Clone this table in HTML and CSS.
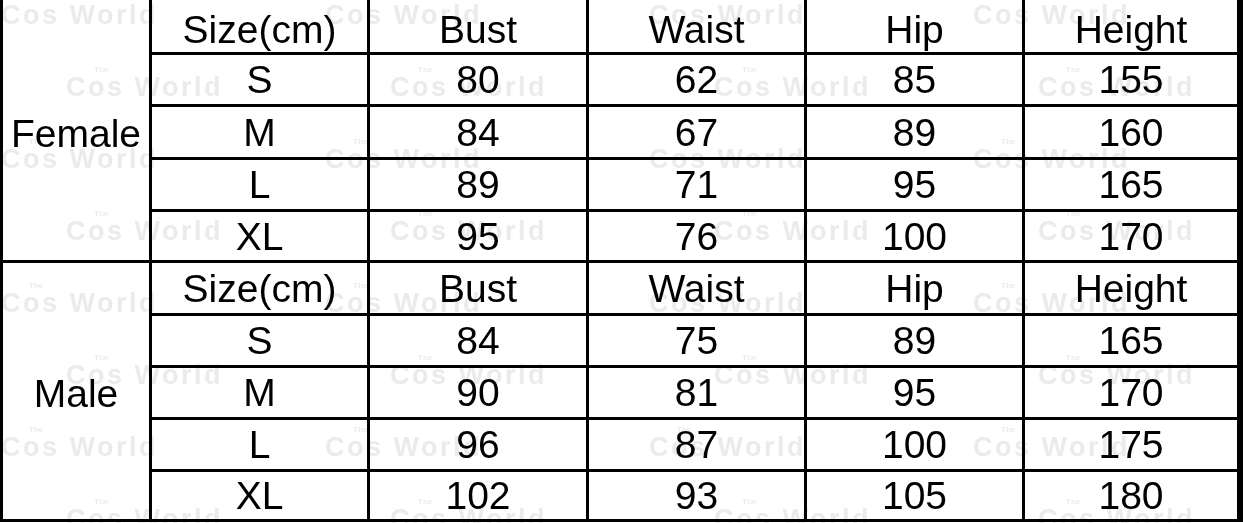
FILE: index.html
```html
<!DOCTYPE html>
<html>
<head>
<meta charset="utf-8">
<link rel="stylesheet" href="styles.css">
</head>
<body>
<div class="page">
  <div class="table">
    <div class="cell label female">Female</div>
    <div class="cell">Size(cm)</div><div class="cell">Bust</div><div class="cell">Waist</div><div class="cell">Hip</div><div class="cell">Height</div>
    <div class="cell">S</div><div class="cell">80</div><div class="cell">62</div><div class="cell">85</div><div class="cell">155</div>
    <div class="cell">M</div><div class="cell">84</div><div class="cell">67</div><div class="cell">89</div><div class="cell">160</div>
    <div class="cell">L</div><div class="cell">89</div><div class="cell">71</div><div class="cell">95</div><div class="cell">165</div>
    <div class="cell">XL</div><div class="cell">95</div><div class="cell">76</div><div class="cell">100</div><div class="cell">170</div>
    <div class="cell label male">Male</div>
    <div class="cell">Size(cm)</div><div class="cell">Bust</div><div class="cell">Waist</div><div class="cell">Hip</div><div class="cell">Height</div>
    <div class="cell">S</div><div class="cell">84</div><div class="cell">75</div><div class="cell">89</div><div class="cell">165</div>
    <div class="cell">M</div><div class="cell">90</div><div class="cell">81</div><div class="cell">95</div><div class="cell">170</div>
    <div class="cell">L</div><div class="cell">96</div><div class="cell">87</div><div class="cell">100</div><div class="cell">175</div>
    <div class="cell">XL</div><div class="cell">102</div><div class="cell">93</div><div class="cell">105</div><div class="cell">180</div>
  </div>
  <div class="watermarks" aria-hidden="true">
    <div class="wm-row even"><div class="wm"><span class="wm-the">The</span><span class="wm-name">Cos World</span></div><div class="wm"><span class="wm-the">The</span><span class="wm-name">Cos World</span></div><div class="wm"><span class="wm-the">The</span><span class="wm-name">Cos World</span></div><div class="wm"><span class="wm-the">The</span><span class="wm-name">Cos World</span></div></div>
    <div class="wm-row odd"><div class="wm"><span class="wm-the">The</span><span class="wm-name">Cos World</span></div><div class="wm"><span class="wm-the">The</span><span class="wm-name">Cos World</span></div><div class="wm"><span class="wm-the">The</span><span class="wm-name">Cos World</span></div><div class="wm"><span class="wm-the">The</span><span class="wm-name">Cos World</span></div></div>
    <div class="wm-row even"><div class="wm"><span class="wm-the">The</span><span class="wm-name">Cos World</span></div><div class="wm"><span class="wm-the">The</span><span class="wm-name">Cos World</span></div><div class="wm"><span class="wm-the">The</span><span class="wm-name">Cos World</span></div><div class="wm"><span class="wm-the">The</span><span class="wm-name">Cos World</span></div></div>
    <div class="wm-row odd"><div class="wm"><span class="wm-the">The</span><span class="wm-name">Cos World</span></div><div class="wm"><span class="wm-the">The</span><span class="wm-name">Cos World</span></div><div class="wm"><span class="wm-the">The</span><span class="wm-name">Cos World</span></div><div class="wm"><span class="wm-the">The</span><span class="wm-name">Cos World</span></div></div>
    <div class="wm-row even"><div class="wm"><span class="wm-the">The</span><span class="wm-name">Cos World</span></div><div class="wm"><span class="wm-the">The</span><span class="wm-name">Cos World</span></div><div class="wm"><span class="wm-the">The</span><span class="wm-name">Cos World</span></div><div class="wm"><span class="wm-the">The</span><span class="wm-name">Cos World</span></div></div>
    <div class="wm-row odd"><div class="wm"><span class="wm-the">The</span><span class="wm-name">Cos World</span></div><div class="wm"><span class="wm-the">The</span><span class="wm-name">Cos World</span></div><div class="wm"><span class="wm-the">The</span><span class="wm-name">Cos World</span></div><div class="wm"><span class="wm-the">The</span><span class="wm-name">Cos World</span></div></div>
    <div class="wm-row even"><div class="wm"><span class="wm-the">The</span><span class="wm-name">Cos World</span></div><div class="wm"><span class="wm-the">The</span><span class="wm-name">Cos World</span></div><div class="wm"><span class="wm-the">The</span><span class="wm-name">Cos World</span></div><div class="wm"><span class="wm-the">The</span><span class="wm-name">Cos World</span></div></div>
    <div class="wm-row odd"><div class="wm"><span class="wm-the">The</span><span class="wm-name">Cos World</span></div><div class="wm"><span class="wm-the">The</span><span class="wm-name">Cos World</span></div><div class="wm"><span class="wm-the">The</span><span class="wm-name">Cos World</span></div><div class="wm"><span class="wm-the">The</span><span class="wm-name">Cos World</span></div></div>
  </div>
</div>
</body>
</html>
```
FILE: styles.css
```css
html, body {
  margin: 0;
  padding: 0;
  background: #fff;
  overflow: hidden;
}
.page {
  position: relative;
  width: 1243px;
  height: 523px;
  overflow: hidden;
  font-family: "Liberation Sans", Arial, sans-serif;
}
.table {
  display: grid;
  grid-template-columns: 146px 215px 216px 215px 215px 212px;
  grid-template-rows: 52px 49px 50px 49px 48px 50px 49px 49px 49px 47px;
  gap: 3px;
  padding: 0 6px 3px 3px;
  width: max-content;
  background: #000;
}
.cell {
  background: #fff;
  color: #000;
  font-size: 39px;
  line-height: 1;
  display: flex;
  align-items: center;
  justify-content: center;
  white-space: nowrap;
}
.label {
  grid-column: 1;
  grid-row: span 5;
}
.female { grid-row: 1 / span 5; padding-top: 6px; }
.male { grid-row: 6 / span 5; padding-top: 4px; }
.table > .cell:nth-child(-n+6):not(.label) { padding-top: 6px; }
.watermarks {
  position: absolute;
  top: -6px;
  left: 0;
  right: 0;
  bottom: 0;
  display: flex;
  flex-direction: column;
  pointer-events: none;
  mix-blend-mode: multiply;
}
.wm-row {
  display: flex;
  flex-wrap: nowrap;
  height: 72px;
  flex-shrink: 0;
}
.wm-row.even { padding-left: 1px; }
.wm-row.odd { padding-left: 66px; }
.wm {
  width: 324px;
  flex-shrink: 0;
  display: flex;
  flex-direction: column;
  color: #ebebeb;
  font-family: "Liberation Sans", Arial, sans-serif;
}
.wm-the {
  font-size: 8px;
  line-height: 8px;
  padding-left: 28px;
  font-weight: bold;
}
.wm-name {
  font-size: 27px;
  line-height: 27px;
  font-weight: bold;
  letter-spacing: 2.5px;
}
```
